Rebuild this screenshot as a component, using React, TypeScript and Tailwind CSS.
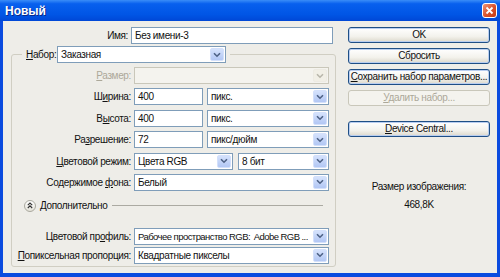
import type { ReactNode } from 'react'

function Chevron({ disabled }: { disabled?: boolean }) {
  return (
    <svg width="8" height="6" viewBox="0 0 8 6">
      <path
        d="M1 1.2 L4 4.2 L7 1.2"
        fill="none"
        stroke={disabled ? '#B8B6AA' : '#4D6185'}
        strokeWidth="1.6"
      />
    </svg>
  )
}

function Select({ children, className = '', disabled }: { children?: ReactNode; className?: string; disabled?: boolean }) {
  return (
    <div
      className={`flex h-[17px] items-center border ${
        disabled ? 'border-[#C9C7BA] bg-[#F4F3EE]' : 'border-[#7F9DB9] bg-white'
      } ${className}`}
    >
      <span className="flex-1 overflow-hidden whitespace-pre pl-[3px] leading-[15px]">{children}</span>
      <span
        className={`m-px flex h-[13px] w-[14px] shrink-0 items-center justify-center rounded-[2px] border ${
          disabled
            ? 'border-[#EDEBE3] bg-[#F1EFE6]'
            : 'border-[#D3E0FB] bg-[linear-gradient(to_bottom,#D5E2FC,#B2C7F4)]'
        }`}
      >
        <Chevron disabled={disabled} />
      </span>
    </div>
  )
}

function Input({ value, className = '' }: { value: string; className?: string }) {
  return (
    <div className={`flex h-[17px] items-center border border-[#7F9DB9] bg-white pl-[3px] leading-[15px] ${className}`}>
      {value}
    </div>
  )
}

function Row({ label, children, disabled }: { label: ReactNode; children: ReactNode; disabled?: boolean }) {
  return (
    <div className="flex h-[17px] items-center">
      <span className={`w-[122px] shrink-0 whitespace-nowrap pr-[3px] text-right ${disabled ? 'text-[#ACA899]' : ''}`}>
        {label}
      </span>
      {children}
    </div>
  )
}

function Button({ children, disabled }: { children: ReactNode; disabled?: boolean }) {
  return (
    <div
      className={`flex h-[16px] items-center justify-center whitespace-nowrap rounded-[3px] border leading-none ${
        disabled
          ? 'border-[#C9C7BA] bg-[#F4F3EE] text-[#ACA899]'
          : 'border-[#1F4F86] bg-[linear-gradient(to_bottom,#FFFFFF,#F3F2EC_60%,#DCD8CC)] shadow-[inset_0_0_0_1px_#B9CEF0]'
      }`}
    >
      {children}
    </div>
  )
}

const U = ({ children }: { children: ReactNode }) => <span className="underline underline-offset-[1px]">{children}</span>

export default function App() {
  return (
    <div className="flex h-[277px] w-[500px] flex-col bg-[#0A4BDF] font-['Liberation_Sans',Arial,sans-serif] text-[10px] tracking-[-0.35px] text-[#111]">
      {/* title bar */}
      <div className="flex h-[21px] shrink-0 items-center bg-[linear-gradient(to_bottom,#3A8DF8,#0860EE_18%,#0055E5_70%,#0047D6)]">
        <span className="ml-[5px] text-[12px] font-bold tracking-normal text-white [text-shadow:1px_1px_0_#0A2A8A]">
          Новый
        </span>
        <div className="ml-auto mr-[3px] flex h-[15px] w-[15px] items-center justify-center rounded-[3px] border border-white bg-[linear-gradient(135deg,#EC9578,#D9512C_55%,#C23B14)]">
          <svg width="9" height="9" viewBox="0 0 9 9">
            <path d="M1.5 1.5 L7.5 7.5 M7.5 1.5 L1.5 7.5" stroke="white" strokeWidth="1.8" />
          </svg>
        </div>
      </div>

      {/* client */}
      <div className="mx-[3px] mb-[4px] flex flex-1 bg-[#EEEDE8]">
        <div className="flex w-[337px] flex-col pl-[8px] pt-[6px]">
          <div className="flex h-[17px] items-center">
            <span className="w-[120px] pr-[3px] text-right">Имя:</span>
            <Input value="Без имени-3" className="w-[202px]" />
          </div>

          <fieldset className="mt-[2px] w-[325px] rounded-[3px] border border-[#D0CEC3] pb-[2px]">
            <legend className="ml-[10px] flex items-center px-[4px]">
              <span className="w-[31px] whitespace-nowrap">
                <U>Н</U>абор:
              </span>
              <Select className="w-[169px]">Заказная</Select>
            </legend>

            <div className="mt-[4px] flex flex-col gap-[4.4px]">
              <Row
                disabled
                label={
                  <>
                    <U>Р</U>азмер:
                  </>
                }
              >
                <Select disabled className="w-[195px]" />
              </Row>
              <Row
                label={
                  <>
                    Ш<U>и</U>рина:
                  </>
                }
              >
                <Input value="400" className="w-[69px]" />
                <Select className="ml-[4px] w-[122px]">пикс.</Select>
              </Row>
              <Row
                label={
                  <>
                    В<U>ы</U>сота:
                  </>
                }
              >
                <Input value="400" className="w-[69px]" />
                <Select className="ml-[4px] w-[122px]">пикс.</Select>
              </Row>
              <Row
                label={
                  <>
                    Ра<U>з</U>решение:
                  </>
                }
              >
                <Input value="72" className="w-[69px]" />
                <Select className="ml-[4px] w-[122px]">пикс/дюйм</Select>
              </Row>
              <Row
                label={
                  <>
                    <U>Ц</U>ветовой режим:
                  </>
                }
              >
                <Select className="w-[99px]">Цвета RGB</Select>
                <Select className="ml-[5px] w-[91px]">8 бит</Select>
              </Row>
              <Row
                label={
                  <>
                    Содержимое <U>ф</U>она:
                  </>
                }
              >
                <Select className="w-[195px]">Белый</Select>
              </Row>
            </div>

            <div className="mt-[8px] flex h-[14px] items-center">
              <span className="ml-[12px] flex h-[12px] w-[12px] items-center justify-center rounded-full border border-[#A9A89E] bg-[linear-gradient(to_bottom,#FFFFFF,#E4E2D8)]">
                <svg width="6" height="7" viewBox="0 0 6 7">
                  <path d="M0.8 3.2 L3 1 L5.2 3.2 M0.8 6 L3 3.8 L5.2 6" fill="none" stroke="#333" strokeWidth="1.1" />
                </svg>
              </span>
              <span className="ml-[4px]">Дополнительно</span>
              <span className="ml-[5px] mr-[12px] h-px flex-1 bg-[#ABAAA2]" />
            </div>

            <div className="mt-[15px] flex flex-col gap-[2px]">
              <Row
                label={
                  <>
                    Цветовой пр<U>о</U>филь:
                  </>
                }
              >
                <Select className="w-[195px] text-[9.5px] tracking-[-0.55px]">Рабочее пространство RGB:  Adobe RGB ...</Select>
              </Row>
              <Row
                label={
                  <>
                    <U>П</U>опиксельная пропорция:
                  </>
                }
              >
                <Select className="w-[195px]">Квадратные пикселы</Select>
              </Row>
            </div>
          </fieldset>
        </div>

        <div className="ml-[8px] flex w-[142px] flex-col pt-[6px]">
          <div className="flex flex-col gap-[5px]">
            <Button>OK</Button>
            <Button>Сбросить</Button>
            <Button>
              <span>
                <U>С</U>охранить набор параметров...
              </span>
            </Button>
            <Button disabled>
              <span>
                <U>У</U>далить набор...
              </span>
            </Button>
          </div>
          <div className="mt-[15px]">
            <Button>
              <span>
                <U>D</U>evice Central...
              </span>
            </Button>
          </div>
          <div className="mt-[43px] text-center leading-[14px]">Размер изображения:</div>
          <div className="mt-[4px] text-center leading-[14px]">468,8K</div>
        </div>
      </div>
    </div>
  )
}
